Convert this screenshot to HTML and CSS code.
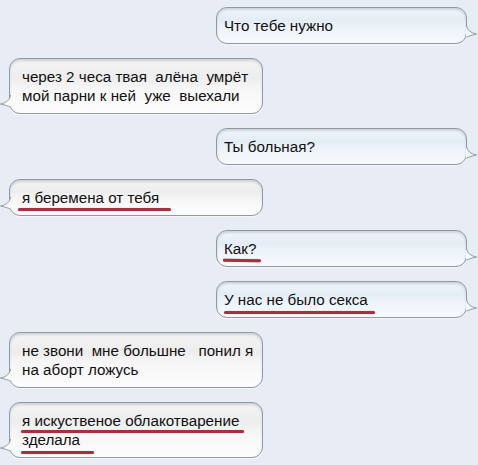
FILE: index.html
```html
<!DOCTYPE html>
<html lang="ru">
<head>
<meta charset="utf-8">
<link rel="stylesheet" href="styles.css">
</head>
<body>
<div class="chat">
  <div class="msg out"><p>Что тебе нужно</p><svg class="tail" viewBox="0 0 11 12"><path class="tf" d="M0 0 C1 5 5 8 10.5 9 C6 10 3 11 0 12 Z"/><path class="ts" d="M0.5 0 C1 5 5 8 10.5 9 C6 10 3 11 0.5 12"/></svg></div>
  <div class="msg in"><p>через 2 чеса твая  алёна  умрёт<br>мой парни к ней  уже  выехали</p><svg class="tail" viewBox="0 0 11 12"><path class="tf" d="M11 0 C10 5 6 8 0.5 9 C5 10 8 11 11 12 Z"/><path class="ts" d="M10.5 0 C10 5 6 8 0.5 9 C5 10 8 11 10.5 12"/></svg></div>
  <div class="msg out"><p>Ты больная?</p><svg class="tail" viewBox="0 0 11 12"><path class="tf" d="M0 0 C1 5 5 8 10.5 9 C6 10 3 11 0 12 Z"/><path class="ts" d="M0.5 0 C1 5 5 8 10.5 9 C6 10 3 11 0.5 12"/></svg></div>
  <div class="msg in"><p><span class="ul ul-a">я беремена от тебя</span></p><svg class="tail" viewBox="0 0 11 12"><path class="tf" d="M11 0 C10 5 6 8 0.5 9 C5 10 8 11 11 12 Z"/><path class="ts" d="M10.5 0 C10 5 6 8 0.5 9 C5 10 8 11 10.5 12"/></svg></div>
  <div class="msg out"><p><span class="ul ul-b">Как?</span></p><svg class="tail" viewBox="0 0 11 12"><path class="tf" d="M0 0 C1 5 5 8 10.5 9 C6 10 3 11 0 12 Z"/><path class="ts" d="M0.5 0 C1 5 5 8 10.5 9 C6 10 3 11 0.5 12"/></svg></div>
  <div class="msg out"><p><span class="ul ul-c">У нас не было секса</span></p><svg class="tail" viewBox="0 0 11 12"><path class="tf" d="M0 0 C1 5 5 8 10.5 9 C6 10 3 11 0 12 Z"/><path class="ts" d="M0.5 0 C1 5 5 8 10.5 9 C6 10 3 11 0.5 12"/></svg></div>
  <div class="msg in"><p>не звони  мне большне   понил я<br>на аборт ложусь</p><svg class="tail" viewBox="0 0 11 12"><path class="tf" d="M11 0 C10 5 6 8 0.5 9 C5 10 8 11 11 12 Z"/><path class="ts" d="M10.5 0 C10 5 6 8 0.5 9 C5 10 8 11 10.5 12"/></svg></div>
  <div class="msg in"><p><span class="ul ul-d">я искуственое облакотварение</span><br><span class="ul ul-e">зделала</span></p><svg class="tail" viewBox="0 0 11 12"><path class="tf" d="M11 0 C10 5 6 8 0.5 9 C5 10 8 11 11 12 Z"/><path class="ts" d="M10.5 0 C10 5 6 8 0.5 9 C5 10 8 11 10.5 12"/></svg></div>
</div>
</body>
</html>
```
FILE: styles.css
```css
html, body {
  margin: 0;
  padding: 0;
  background: #e8edf5;
}
.chat {
  width: 478px;
  height: 465px;
  box-sizing: border-box;
  padding: 7px 11px 0 9px;
  display: flex;
  flex-direction: column;
  gap: 14px;
  font-family: "Liberation Sans", Arial, sans-serif;
  font-size: 15.2px;
  color: #111;
  overflow: hidden;
}
.msg {
  position: relative;
  box-sizing: border-box;
  border: 1px solid #8f99a3;
  border-radius: 11px;
  box-shadow: inset 0 2px 2px rgba(90, 100, 110, 0.22), 0 1px 1px rgba(255,255,255,0.6);
}
.msg p {
  margin: 0;
  line-height: 19px;
  white-space: pre-wrap;
}
.out {
  align-self: flex-end;
  width: 251px;
  padding: 8px 8px 8px 7px;
  background: linear-gradient(to bottom, #f1f6fb 0%, #e3ecf5 35%, #edf3f9 55%, #f7fafd 100%);
}
.in {
  align-self: flex-start;
  width: 254px;
  padding: 8px 6px 8px 12px;
  background: linear-gradient(to bottom, #f3f3f3 0%, #ededed 35%, #f6f6f6 55%, #fdfdfd 100%);
}
.tail {
  position: absolute;
  width: 11px;
  height: 12px;
  bottom: 6px;
  overflow: visible;
}
.out .tail { right: -10.5px; }
.in .tail { left: -10.5px; }
.tf { stroke: none; }
.out .tf { fill: #f5f9fc; }
.in .tf { fill: #fbfbfb; }
.ts { fill: none; stroke: #8f99a3; stroke-width: 1; }

.ul {
  position: relative;
}
.ul::after {
  content: "";
  position: absolute;
  height: 2.6px;
  bottom: -5px;
  border-radius: 2px;
  background: #a5303f;
  box-shadow: 0 0 1px rgba(200, 60, 80, 0.6);
}
.ul-a::after { left: -4px; right: -12px; }
.ul-b::after { left: -1px; right: -5px; transform: rotate(0.6deg); }
.ul-c::after { left: 0; right: -7px; bottom: -6px; }
.ul-d::after { left: -1px; right: -5px; bottom: -4px; }
.ul-e::after { left: -1px; right: -14px; bottom: -6px; }
```
